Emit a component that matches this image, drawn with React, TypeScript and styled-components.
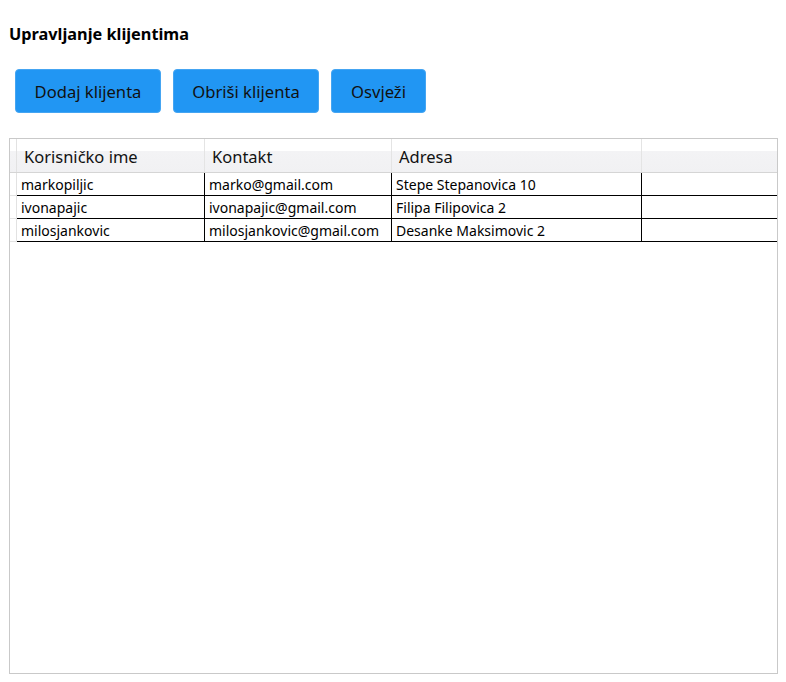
import styled, { createGlobalStyle } from "styled-components";

const clients = [
    { username: "markopiljic", contact: "marko@gmail.com", address: "Stepe Stepanovica 10" },
    { username: "ivonapajic", contact: "ivonapajic@gmail.com", address: "Filipa Filipovica 2" },
    { username: "milosjankovic", contact: "milosjankovic@gmail.com", address: "Desanke Maksimovic 2" },
];

const GlobalStyle = createGlobalStyle`
    html, body{
        margin: 0;
        padding: 0;
        background: #ffffff;
    }
    *{
        box-sizing: border-box;
    }
`;

const Wrapper = styled.main`
    display: flex;
    flex-direction: column;
    height: 682px;
    padding: 24px 8px 8px 9px;
    font-family: "Noto Sans", "Open Sans", sans-serif;
    color: #000000;
`;

const Title = styled.h1`
    margin: 0;
    font-size: 16.3px;
    line-height: 20px;
    font-weight: 700;
`;

const Toolbar = styled.div`
    display: flex;
    gap: 12px;
    margin: 25px 0 0 6px;
`;

const Button = styled.button<{ $width: number }>`
    width: ${(props) => props.$width}px;
    height: 44px;
    border: 1px solid #45a5f2;
    border-radius: 4px;
    background-color: #2196f3;
    color: #111111;
    font-family: inherit;
    font-size: 16.6px;
    padding: 0;
`;

const Grid = styled.section`
    flex: 1;
    margin-top: 25px;
    border: 1px solid #c9c9c9;
    display: flex;
    flex-direction: column;
`;

const Row = styled.div<{ $header?: boolean }>`
    display: grid;
    grid-template-columns: 7px 188px 187px 250px 1fr;
    height: ${(props) => (props.$header ? "34px" : "23px")};
    ${(props) =>
        props.$header
            ? `background: linear-gradient(to bottom, #ffffff 0, #ffffff 12px, #f3f3f5 12px, #f1f1f3 100%);
               border-bottom: 1px solid #d5d5d5;`
            : ""}
`;

const RowHead = styled.div<{ $header?: boolean }>`
    border-right: 1px solid #e2e2e2;
    border-bottom: ${(props) => (props.$header ? "none" : "1px solid #e2e2e2")};
`;

const HeadCell = styled.div<{ $last?: boolean }>`
    display: flex;
    align-items: center;
    padding: 1px 0 0 7px;
    font-size: 16.5px;
    color: #111111;
    border-right: ${(props) => (props.$last ? "none" : "1px solid #e4e4e4")};
    white-space: nowrap;
    overflow: hidden;
`;

const Cell = styled.div<{ $last?: boolean }>`
    display: flex;
    align-items: center;
    padding: 0 0 0 4px;
    font-size: 14px;
    border-bottom: 1px solid #000000;
    border-right: ${(props) => (props.$last ? "none" : "1px solid #000000")};
    white-space: nowrap;
    overflow: hidden;
`;

export default function App() {
    return (
        <>
            <GlobalStyle />
            <Wrapper>
                <Title>Upravljanje klijentima</Title>
                <Toolbar>
                    <Button $width={146}>Dodaj klijenta</Button>
                    <Button $width={146}>Obriši klijenta</Button>
                    <Button $width={95}>Osvježi</Button>
                </Toolbar>
                <Grid>
                    <Row $header>
                        <RowHead $header />
                        <HeadCell>Korisničko ime</HeadCell>
                        <HeadCell>Kontakt</HeadCell>
                        <HeadCell>Adresa</HeadCell>
                        <HeadCell $last></HeadCell>
                    </Row>
                    {clients.map((item) => (
                        <Row key={item.username}>
                            <RowHead />
                            <Cell>{item.username}</Cell>
                            <Cell>{item.contact}</Cell>
                            <Cell>{item.address}</Cell>
                            <Cell $last></Cell>
                        </Row>
                    ))}
                </Grid>
            </Wrapper>
        </>
    );
}
